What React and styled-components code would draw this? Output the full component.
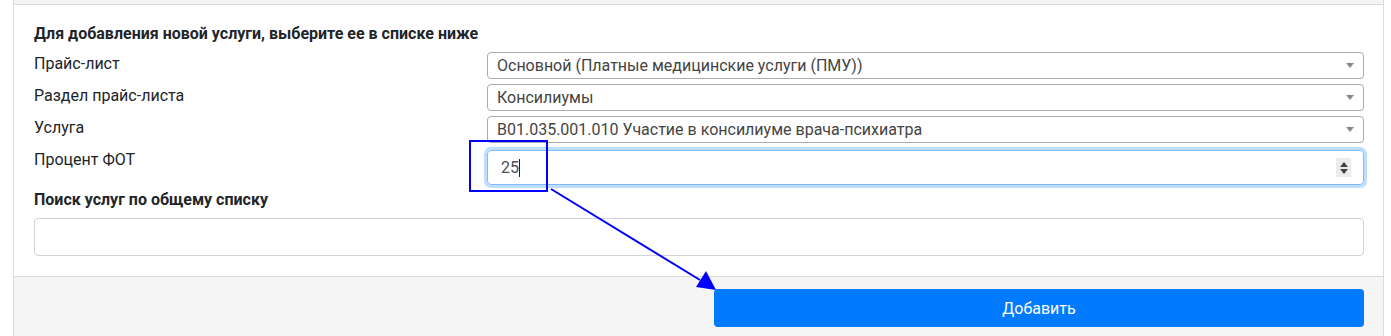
import React from "react"
import styled, { createGlobalStyle } from "styled-components"

const GlobalStyle = createGlobalStyle`
  html, body {
    margin: 0;
    padding: 0;
    background: #fff;
    font-family: Roboto, "Liberation Sans", sans-serif;
    color: #212529;
  }
`

const Page = styled.div`
  position: relative;
  width: 1391px;
  height: 336px;
  overflow: hidden;
`

const Panel = styled.div`
  margin-left: 13px;
  width: 1369px;
  border-left: 1px solid #dcdcdc;
  border-right: 1px solid #dcdcdc;
`

const TopStrip = styled.div`
  height: 4px;
  background: #f5f5f5;
  border-bottom: 1px solid #dcdcdc;
`

const Body = styled.div`
  padding: 19px 19px 20px 20px;
`

const Heading = styled.div`
  font-size: 16px;
  font-weight: 700;
  line-height: 20px;
  color: #212529;
`

const FormGrid = styled.div`
  display: grid;
  grid-template-columns: 423px 877px;
  column-gap: 30px;
  row-gap: 5px;
  margin-top: 8px;
  margin-bottom: 5px;
`

const Label = styled.div`
  font-size: 16px;
  line-height: 20px;
  padding-top: 2px;
`

const Select = styled.div`
  box-sizing: border-box;
  height: 27px;
  border: 1px solid #aaa;
  border-radius: 4px;
  display: flex;
  align-items: center;
  padding: 0 8px 0 9px;
  font-size: 16px;
  color: #444;
  background: #fff;
`

const SelectText = styled.span`
  flex: 1;
  white-space: nowrap;
`

const Caret = styled.span`
  width: 0;
  height: 0;
  border-left: 4px solid transparent;
  border-right: 4px solid transparent;
  border-top: 5px solid #888;
  margin-right: 1px;
`

const NumberInput = styled.div`
  box-sizing: border-box;
  height: 35px;
  margin-top: 2px;
  border: 1px solid #80bdff;
  border-radius: 4px;
  box-shadow: 0 0 0 3px rgba(0, 123, 255, 0.25);
  display: flex;
  align-items: center;
  padding: 0 12px 0 13px;
  font-size: 16px;
  color: #495057;
`

const Value = styled.span`
  flex: 1;
  display: flex;
  align-items: center;
`

const Cursor = styled.span`
  width: 1px;
  height: 18px;
  background: #222;
`

const Spinner = styled.span`
  width: 15px;
  height: 19px;
  background: #ececec;
  display: flex;
  flex-direction: column;
  align-items: center;
  justify-content: center;
  gap: 2px;
`

const Tri = styled.span`
  width: 0;
  height: 0;
  border-left: 4px solid transparent;
  border-right: 4px solid transparent;
  ${(p) => (p.$up ? "border-bottom: 5px solid #444;" : "border-top: 5px solid #444;")}
`

const TextInput = styled.div`
  box-sizing: border-box;
  height: 38px;
  border: 1px solid #ced4da;
  border-radius: 4px;
  margin-top: 8px;
`

const Footer = styled.div`
  border-top: 1px solid #dcdcdc;
  background: #f5f5f5;
  height: 80px;
  padding: 12px 19px 0 20px;
  display: grid;
  grid-template-columns: 650px 650px;
  column-gap: 30px;
  align-content: start;
`

const Button = styled.button`
  grid-column: 2;
  height: 38px;
  border: none;
  border-radius: 4px;
  background: #007bff;
  color: #fff;
  font-family: Roboto, "Liberation Sans", sans-serif;
  font-size: 16px;
`

const Overlay = styled.svg`
  position: absolute;
  left: 0;
  top: 0;
  pointer-events: none;
`

const rows = [
  ["Прайс-лист", "Основной (Платные медицинские услуги (ПМУ))"],
  ["Раздел прайс-листа", "Консилиумы"],
  ["Услуга", "B01.035.001.010 Участие в консилиуме врача-психиатра"],
]

export default function App() {
  return (
    <Page>
      <GlobalStyle />
      <Panel>
        <TopStrip />
        <Body>
          <Heading>Для добавления новой услуги, выберите ее в списке ниже</Heading>
          <FormGrid>
            {rows.map(([label, value]) => (
              <React.Fragment key={label}>
                <Label>{label}</Label>
                <Select>
                  <SelectText>{value}</SelectText>
                  <Caret />
                </Select>
              </React.Fragment>
            ))}
            <Label>Процент ФОТ</Label>
            <NumberInput>
              <Value>
                25
                <Cursor />
              </Value>
              <Spinner>
                <Tri $up />
                <Tri />
              </Spinner>
            </NumberInput>
          </FormGrid>
          <Heading>Поиск услуг по общему списку</Heading>
          <TextInput />
        </Body>
        <Footer>
          <Button>Добавить</Button>
        </Footer>
      </Panel>
      <Overlay width="1391" height="336">
        <rect x="470" y="141" width="77" height="50" fill="none" stroke="#0000ff" strokeWidth="2" />
        <line x1="551" y1="189" x2="700" y2="280" stroke="#0000ff" strokeWidth="2" />
        <polygon points="716,290 696,287 706,271" fill="#0000ff" />
      </Overlay>
    </Page>
  )
}
